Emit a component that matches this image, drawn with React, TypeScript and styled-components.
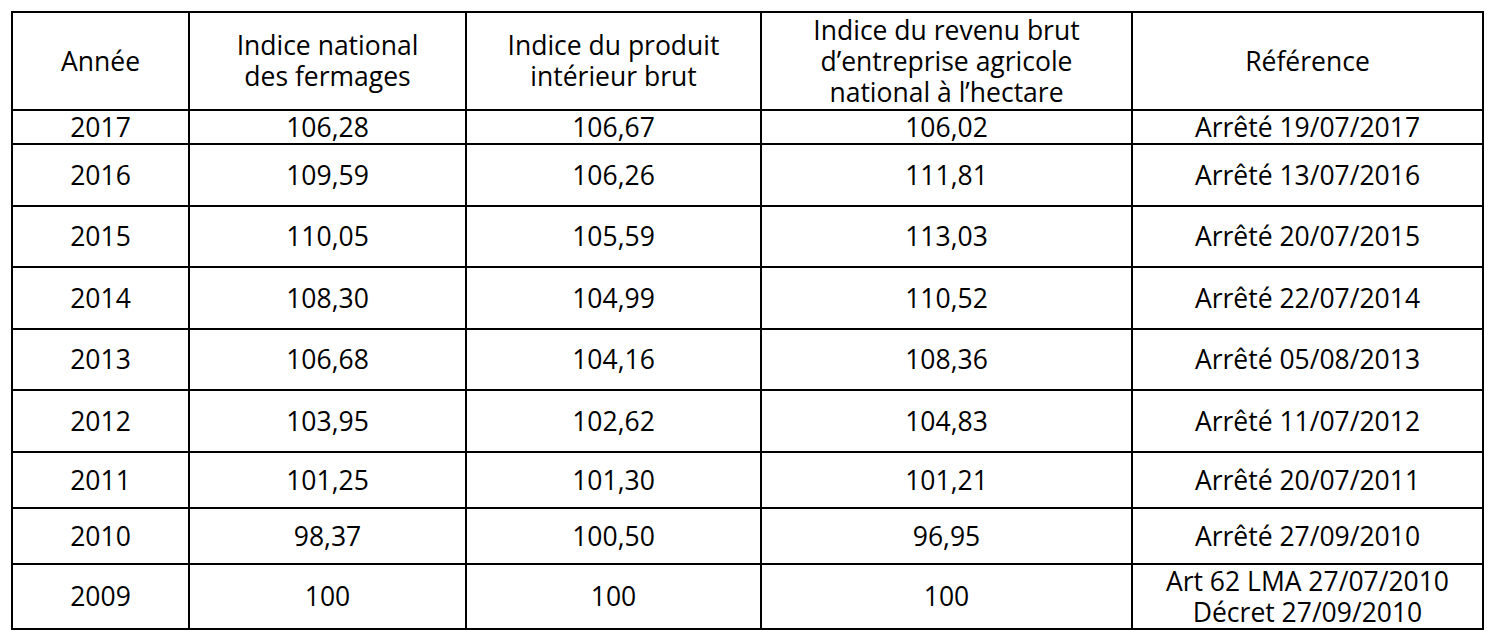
import React, { FC } from 'react';
import styled, { createGlobalStyle } from 'styled-components';

const GlobalStyle = createGlobalStyle`
  html, body {
    margin: 0;
    padding: 0;
    background: #fff;
  }
  body {
    font-family: "Open Sans", "Liberation Sans", sans-serif;
    color: #000;
  }
`;

const Page = styled.div`
  padding: 11px 0 0 11px;
`;

const Table = styled.table`
  table-layout: fixed;
  border-collapse: separate;
  border-spacing: 0;
  width: 1473px;
  border-top: 2px solid #000;
  border-left: 2px solid #000;
  font-size: 26.5px;
  line-height: 31px;
`;

const Row = styled.tr<{ $h: number }>`
  height: ${p => p.$h}px;
`;

const Cell = styled.td`
  box-sizing: border-box;
  padding: 0;
  text-align: center;
  vertical-align: middle;
  border-right: 2px solid #000;
  border-bottom: 2px solid #000;
  white-space: nowrap;
`;

const HeadCell = styled(Cell).attrs({ as: 'th' })`
  font-weight: 400;
`;

const colWidths = [177, 277, 295, 371, 351];

const headers: string[][] = [
  ['Année'],
  ['Indice national', 'des fermages'],
  ['Indice du produit', 'intérieur brut'],
  ['Indice du revenu brut', 'd’entreprise agricole', 'national à l’hectare'],
  ['Référence'],
];

interface DataRow {
  year: string;
  fermages: string;
  pib: string;
  revenu: string;
  ref: string[];
  h: number;
}

const rows: DataRow[] = [
  { year: '2017', fermages: '106,28', pib: '106,67', revenu: '106,02', ref: ['Arrêté 19/07/2017'], h: 34 },
  { year: '2016', fermages: '109,59', pib: '106,26', revenu: '111,81', ref: ['Arrêté 13/07/2016'], h: 62 },
  { year: '2015', fermages: '110,05', pib: '105,59', revenu: '113,03', ref: ['Arrêté 20/07/2015'], h: 61 },
  { year: '2014', fermages: '108,30', pib: '104,99', revenu: '110,52', ref: ['Arrêté 22/07/2014'], h: 62 },
  { year: '2013', fermages: '106,68', pib: '104,16', revenu: '108,36', ref: ['Arrêté 05/08/2013'], h: 61 },
  { year: '2012', fermages: '103,95', pib: '102,62', revenu: '104,83', ref: ['Arrêté 11/07/2012'], h: 62 },
  { year: '2011', fermages: '101,25', pib: '101,30', revenu: '101,21', ref: ['Arrêté 20/07/2011'], h: 56 },
  { year: '2010', fermages: '98,37', pib: '100,50', revenu: '96,95', ref: ['Arrêté 27/09/2010'], h: 56 },
  { year: '2009', fermages: '100', pib: '100', revenu: '100', ref: ['Art 62 LMA 27/07/2010', 'Décret 27/09/2010'], h: 65 },
];

const Lines: FC<{ lines: string[] }> = ({ lines }) => (
  <>
    {lines.map((l, i) => (
      <React.Fragment key={i}>
        {i > 0 && <br />}
        {l}
      </React.Fragment>
    ))}
  </>
);

const App: FC = () => (
  <Page>
    <GlobalStyle />
    <Table>
      <colgroup>
        {colWidths.map((w, i) => (
          <col key={i} style={{ width: w }} />
        ))}
      </colgroup>
      <thead>
        <Row $h={98}>
          {headers.map((h, i) => (
            <HeadCell key={i}>
              <Lines lines={h} />
            </HeadCell>
          ))}
        </Row>
      </thead>
      <tbody>
        {rows.map(r => (
          <Row key={r.year} $h={r.h}>
            <Cell>{r.year}</Cell>
            <Cell>{r.fermages}</Cell>
            <Cell>{r.pib}</Cell>
            <Cell>{r.revenu}</Cell>
            <Cell>
              <Lines lines={r.ref} />
            </Cell>
          </Row>
        ))}
      </tbody>
    </Table>
  </Page>
);

export default App;
